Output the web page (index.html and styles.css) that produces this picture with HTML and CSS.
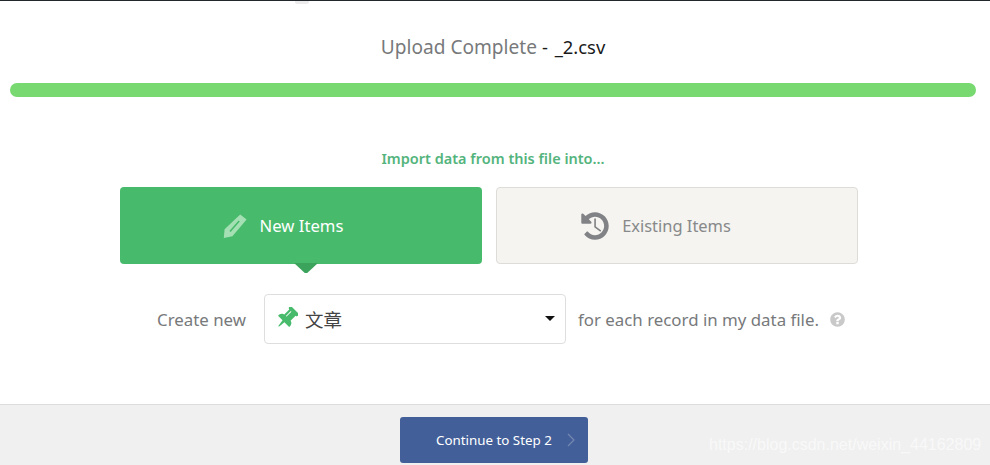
FILE: index.html
```html
<!DOCTYPE html>
<html lang="en">
<head>
<meta charset="utf-8">
<title>Import</title>
<link rel="stylesheet" href="styles.css">
</head>
<body>
<div class="page">
  <span class="top-tab"></span>
  <main class="main">
    <h1 class="title">Upload Complete <span class="file">- _2.csv</span></h1>
    <div class="bar"></div>
    <p class="lead">Import data from this file into...</p>
    <div class="cards">
      <div class="card card-on">
        <svg class="ic-pencil" viewBox="0 0 24 24"><path fill-rule="evenodd" d="M17.2 0.4 23.6 5.6 9.4 22.2 0.8 24 1.6 15.2ZM15.6 6.6 6.4 17 7.6 18 16.8 7.6Z"/></svg>
        <span>New Items</span>
        <i class="caret"></i>
      </div>
      <div class="card card-off">
        <svg class="ic-history" viewBox="0 0 1792 1792"><path d="M1664 896q0 156-61 298t-164 245-245 164-298 61q-172 0-327-72.500t-264-204.500q-7-10-6.500-22.500t8.500-20.500l137-138q10-9 25-9 16 2 23 12 73 95 179 147t225 52q104 0 198.500-40.500t163.500-109.500 109.500-163.500 40.500-198.500-40.500-198.500-109.500-163.500-163.500-109.500-198.500-40.500q-98 0-188 35.500t-160 101.500l137 138q31 30 14 69-17 40-59 40h-448q-26 0-45-19t-19-45v-448q0-42 40-59 39-17 69 14l130 129q107-101 244.500-156.500t284.500-55.500q156 0 298 61t245 164 164 245 61 298z"/><path class="hands" d="M900 480V940L1220 1180"/></svg>
        <span>Existing Items</span>
      </div>
    </div>
    <div class="row">
      <span class="row-label">Create new</span>
      <div class="select">
        <svg class="ic-pin" viewBox="0 0 1792 1792"><path transform="translate(320 0) rotate(45 576 896)" d="M480 672v-448q0-14-9-23t-23-9-23 9-9 23v448q0 14 9 23t23 9 23-9 9-23zm672 352q0 26-19 45t-45 19h-429l-51 483q-2 12-10.500 20.500t-20.500 8.500h-1q-27 0-32-27l-76-485h-404q-26 0-45-19t-19-45q0-123 78.500-221.500t177.500-98.500v-512q-52 0-90-38t-38-90 38-90 90-38h640q52 0 90 38t38 90-38 90-90 38v512q99 0 177.500 98.500t78.500 221.500z"/></svg>
        <span class="select-text">文章</span>
        <i class="select-caret"></i>
      </div>
      <span class="row-tail">for each record in my data file.</span>
      <svg class="ic-help" viewBox="0 0 1792 1792"><path d="M1024 1376v-192q0-14-9-23t-23-9h-192q-14 0-23 9t-9 23v192q0 14 9 23t23 9h192q14 0 23-9t9-23zm256-672q0-88-55.500-163t-138.500-116-170-41q-243 0-371 213-15 24 8 42l132 100q7 6 19 6 16 0 25-12 53-68 86-92 34-24 86-24 48 0 85.500 26t37.500 59q0 38-20 61t-68 45q-63 28-115.500 86.500t-52.500 125.500v36q0 14 9 23t23 9h192q14 0 23-9t9-23q0-19 21.500-49.500t54.500-49.500q32-18 49-28.500t46-35 44.500-48 28-60.500 12.500-81zm384 192q0 209-103 385.500t-279.500 279.500-385.500 103-385.500-103-279.500-279.500-103-385.500 103-385.500 279.500-279.500 385.500-103 385.500 103 279.500 279.500 103 385.500z"/></svg>
    </div>
  </main>
  <footer class="footer">
    <button class="next" type="button">
      <span>Continue to Step 2</span>
      <svg class="ic-chev" viewBox="0 0 8 14"><path d="M1 1l6 6-6 6"/></svg>
    </button>
    <span class="watermark">https://blog.csdn.net/weixin_44162809</span>
  </footer>
</div>
</body>
</html>
```
FILE: styles.css
```css
* { box-sizing: border-box; }
html, body { margin: 0; padding: 0; }
body { background: #fff; font-family: "Noto Sans", "Noto Sans CJK SC", sans-serif; color: #6f7172; }
.page { position: relative; width: 990px; height: 465px; overflow: hidden; display: flex; flex-direction: column; border-top: 1px solid #22272b; }
.top-tab { position: absolute; left: 295px; top: 0; width: 14px; height: 3px; background: #ececec; border-radius: 0 0 2px 2px; }
.main { flex: 1; display: flex; flex-direction: column; align-items: center; width: 986px; }
.title { margin: 33px 0 0; height: 26px; line-height: 26px; font-size: 19.1px; font-weight: 400; color: #77797b; white-space: pre; }
.file { color: #1a1a1a; font-size: 18.4px; word-spacing: 2px; }
.bar { width: 966px; height: 14px; margin-top: 23px; border-radius: 7px; background: #78d971; }
.lead { margin: 51px 0 0; height: 20px; line-height: 20px; font-size: 14.5px; font-weight: 600; color: #54b47d; }
.cards { display: flex; gap: 14px; margin: 19px 8px 0 0; }
.card { position: relative; width: 362px; height: 77px; display: flex; align-items: center; justify-content: center; gap: 13px; border-radius: 4px; font-size: 16.7px; }
.card-on { background: #47bb6b; color: #fff; padding-right: 36px; }
.card-off { background: #f5f4f0; border: 1px solid #dddcd8; color: #87898a; padding-right: 44px; gap: 11px; font-size: 16.45px; }
.ic-pencil { width: 24px; height: 24px; fill: #a4e0b3; }
.ic-history { width: 32px; height: 32px; fill: #808285; }
.hands { fill: none; stroke: #808285; stroke-width: 90; }
.caret { position: absolute; left: 174px; top: 76px; width: 24px; height: 10px; background: #3ba35c; clip-path: polygon(0 0, 100% 0, 55% 100%, 45% 100%); }
.row { display: flex; align-items: center; margin: 30px 0 0 17px; height: 50px; font-size: 16.85px; color: #77797b; }
.row-label { margin-right: 18px; padding-top: 1px; }
.select { position: relative; display: flex; align-items: center; width: 302px; height: 50px; padding-left: 8px; background: #fff; border: 1px solid #dedede; border-radius: 4px; font-size: 18.5px; color: #444; }
.ic-pin { width: 25px; height: 25px; fill: #47bb6b; margin-right: 7px; }
.select-text { line-height: 24px; padding-top: 1px; }
.select-caret { position: absolute; right: 10px; top: 21px; width: 0; height: 0; border-left: 5px solid transparent; border-right: 5px solid transparent; border-top: 5px solid #111; }
.row-tail { margin-left: 12px; padding-top: 1px; }
.ic-help { width: 17px; height: 17px; margin-left: 10px; fill: #c9c9c9; }
.footer { position: relative; height: 61px; flex: none; background: #f0f0f0; border-top: 1px solid #dcdcdc; padding: 12px 0 0 400px; }
.next { display: flex; align-items: center; width: 188px; height: 46px; padding: 0 0 0 36px; border: 0; border-radius: 3px; background: #425f99; color: #fff; font: 400 13.35px "Noto Sans", sans-serif; }
.ic-chev { width: 8px; height: 14px; margin-left: 15px; fill: none; stroke: #7488b3; stroke-width: 1.2; }
.watermark { position: absolute; left: 709px; top: 31px; font: 400 16px "Liberation Sans", sans-serif; color: rgba(255,255,255,.6); white-space: nowrap; }
```
